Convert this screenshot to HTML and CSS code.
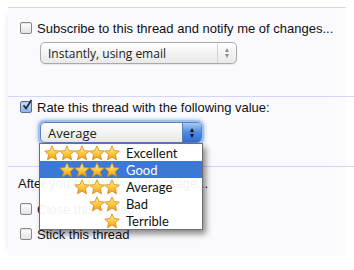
FILE: index.html
```html
<html lang="en"><head>
    <meta charset="UTF-8">
    <title>Thread options</title>
    <link rel="stylesheet" href="styles.css">
</head>
<body>
    <svg width="0" height="0" class="defs">
        <defs>
            <linearGradient id="starFill" x1="0" y1="0" x2="0" y2="1">
                <stop offset="0" stop-color="#fff0b0"/>
                <stop offset="0.5" stop-color="#ffcc40"/>
                <stop offset="1" stop-color="#ec9814"/>
            </linearGradient>
            <symbol id="star" viewBox="0 0 16 16">
                <path d="M8 0.8 L10.1 5.6 L15.3 6.1 L11.4 9.6 L12.5 14.8 L8 12.1 L3.5 14.8 L4.6 9.6 L0.7 6.1 L5.9 5.6 Z" fill="url(#starFill)" stroke="#d3861a" stroke-width="0.8" stroke-linejoin="round"/>
            </symbol>
        </defs>
    </svg>
    <div id="panel">
        <div class="section first">
            <label class="row"><span class="check"></span>Subscribe to this thread and notify me of changes...</label>
            <div class="select plain">
                <span class="value">Instantly, using email</span>
                <span class="arrows"><i class="up"></i><i class="down"></i></span>
            </div>
        </div>
        <div class="section second">
            <label class="row"><span class="check on"><svg viewBox="0 0 12 12"><path d="M2.5 6.2 L5 9.5 L10.5 1" fill="none" stroke="#1d2a4a" stroke-width="1.8"/></svg></span>Rate this thread with the following value:</label>
            <div class="select focused">
                <span class="value">Average</span>
                <span class="arrows"><i class="up"></i><i class="down"></i></span>
                <ul class="menu">
                    <li><span class="stars" data-n="5"></span>Excellent</li>
                    <li class="active"><span class="stars" data-n="4"></span>Good</li>
                    <li><span class="stars" data-n="3"></span>Average</li>
                    <li><span class="stars" data-n="2"></span>Bad</li>
                    <li><span class="stars" data-n="1"></span>Terrible</li>
                </ul>
            </div>
        </div>
        <div class="section third">
            <div class="note">After you submit your message...</div>
            <label class="row"><span class="check"></span>Close this thread</label>
            <label class="row"><span class="check"></span>Stick this thread</label>
        </div>
    </div>

    <script>
        document.querySelectorAll('.stars').forEach(function(el) {
            let n = parseInt(el.dataset.n);
            let html = '';
            for (let i = 0; i < n; i++) {
                html += '<svg class="star"><use href="#star"/></svg>';
            }
            el.innerHTML = html;
        });
    </script>
</body></html>
```
FILE: styles.css
```css
body {
    margin: 0;
    background-color: #ffffff;
    font-family: "Liberation Sans", Arial, sans-serif;
    font-size: 13px;
    color: #111;
}
.defs {
    position: absolute;
}
#panel {
    margin-left: 8px;
    margin-top: 7px;
    width: 338px;
    height: 248px;
    background: linear-gradient(to right, #f9f9fe 0%, #f9f9fe 92%, #fcfcfe 100%);
    border-top: 1px solid #d3d7f3;
    box-shadow: -8px 0 6px -6px rgba(0, 0, 0, 0.06);
}
.section {
    position: relative;
}
.section.first {
    height: 88px;
    padding-top: 12px;
    box-sizing: border-box;
}
.section.second {
    height: 70px;
    padding-top: 2px;
    box-sizing: border-box;
    border-top: 1px solid #d3d7f3;
    margin-right: -8px;
}
.section.third {
    border-top: 1px solid #d3d7f3;
    margin-right: -8px;
    padding-top: 9px;
}
.row {
    display: flex;
    align-items: center;
    height: 16px;
    margin-left: 12px;
}
.check {
    display: inline-block;
    width: 10px;
    height: 10px;
    margin-right: 5px;
    border: 1px solid #8a8a8a;
    border-radius: 2px;
    background: linear-gradient(#ffffff, #e2e2e2);
    box-shadow: inset 0 1px 1px rgba(0, 0, 0, 0.1);
    position: relative;
}
.check.on {
    background: linear-gradient(#cfe0f7, #8fb3e6);
    border-color: #5a6f90;
}
.check svg {
    position: absolute;
    left: 0;
    top: -3px;
    width: 12px;
    height: 12px;
}
.select {
    position: relative;
    display: flex;
    align-items: center;
    margin-left: 32px;
    height: 22px;
    box-sizing: border-box;
    border: 1px solid #a9a9a9;
    border-radius: 5px;
    background: linear-gradient(#ffffff, #f3f3f3 50%, #e9e9e9);
    font-family: "Open Sans", "Noto Sans", sans-serif;
    font-size: 12px;
}
.select.plain {
    margin-top: 6px;
    width: 197px;
    box-shadow: 0 1px 1px rgba(0, 0, 0, 0.08);
}
.select .value {
    flex: 1;
    padding-left: 7px;
    color: #222;
}
.select .arrows {
    width: 18px;
    height: 100%;
    display: flex;
    flex-direction: column;
    align-items: center;
    justify-content: center;
    gap: 2px;
    border-left: 1px solid #d2d2d2;
}
.arrows i {
    width: 0;
    height: 0;
    border-left: 2.5px solid transparent;
    border-right: 2.5px solid transparent;
}
.arrows .up {
    border-bottom: 4px solid #8d8d8d;
}
.arrows .down {
    border-top: 4px solid #8d8d8d;
}
.select.focused {
    margin-top: 7px;
    width: 162px;
    height: 21px;
    border-color: #5b80b8;
    box-shadow: 0 0 0 2px #9ec1ef, 0 0 3px 3px rgba(120, 165, 230, 0.5);
    font-size: 13px;
}
.select.focused .arrows {
    width: 18px;
    border-left: 1px solid #5b80b8;
    border-radius: 0 4px 4px 0;
    background: linear-gradient(#a8c8f2, #4f8ae0 50%, #2f6ed2);
}
.select.focused .arrows .up {
    border-bottom-color: #111;
}
.select.focused .arrows .down {
    border-top-color: #111;
}
.menu {
    list-style: none;
    margin: 0;
    padding: 0;
    position: absolute;
    left: -2px;
    top: 20px;
    width: 164px;
    height: 87px;
    box-sizing: border-box;
    border: 1px solid #6f6f6f;
    background-color: rgba(255, 255, 255, 0.94);
    box-shadow: 3px 4px 6px rgba(0, 0, 0, 0.45);
    z-index: 2;
    font-family: "Lato", "Open Sans", sans-serif;
    font-size: 13px;
    color: #111;
}
.menu li {
    display: flex;
    align-items: center;
    height: 17px;
}
.menu li.active {
    background-color: #3c78d6;
    color: #ffffff;
}
.stars {
    width: 80px;
    display: flex;
    justify-content: flex-end;
    margin-right: 6px;
}
.star {
    width: 16px;
    height: 16px;
    margin-left: -1px;
}
.note {
    margin-left: 10px;
    height: 16px;
    line-height: 16px;
    margin-bottom: 9px;
}
.section.third .row {
    margin-bottom: 9px;
}
```
